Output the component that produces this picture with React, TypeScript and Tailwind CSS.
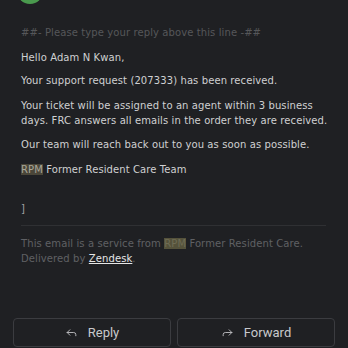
import { Reply, Forward } from "lucide-react";

export default function App() {
  return (
    <div className="relative h-[348px] w-[348px] overflow-hidden bg-[#1f2023]">
      {/* avatar peeking at the top */}
      <div className="absolute left-[17px] top-[-22px] h-[26px] w-[26px] rounded-full bg-[#4a9a4e]" />

      <div className="pl-[21px] pr-[16px] pt-[25px] text-[10px] leading-[15px] tracking-[0.1px] text-[#cfd0d2] font-['DejaVu_Sans',sans-serif]">
        <p className="text-[#56575a]">##- Please type your reply above this line -##</p>
        <p className="mt-[10px]">Hello Adam N Kwan,</p>
        <p className="mt-[8px]">Your support request (207333) has been received.</p>
        <p className="mt-[10px]">
          Your ticket will be assigned to an agent within 3 business days. FRC answers all emails in the order they are received.
        </p>
        <p className="mt-[9px]">Our team will reach back out to you as soon as possible.</p>
        <p className="mt-[10px]">
          <span className="bg-[#4a4639] text-[#a9a69a]">RPM</span> Former Resident Care Team
        </p>
        <p className="mt-[24px] text-[#a0a1a4]">]</p>
        <div className="mt-[9px] h-px w-[305px] bg-[#2f3033]" />
        <p className="mt-[10px] text-[#5f6064]">
          This email is a service from <span className="bg-[#55523b] text-[#6f6c55]">RPM</span> Former Resident Care.
          <br />
          Delivered by <span className="text-[#e6e6e6] underline">Zendesk</span>.
        </p>
      </div>

      <div className="absolute bottom-[1px] left-[13px] right-[13px] flex gap-[6px] font-['Roboto',sans-serif] text-[13px] text-[#c8c9cc]">
        <button className="flex h-[29px] flex-1 items-center justify-center gap-[10px] rounded-[4px] border border-[#3b3c40]">
          <Reply size={13} strokeWidth={1.6} />
          <span>Reply</span>
        </button>
        <button className="flex h-[29px] flex-1 items-center justify-center gap-[10px] rounded-[4px] border border-[#3b3c40]">
          <Forward size={13} strokeWidth={1.6} />
          <span>Forward</span>
        </button>
      </div>
    </div>
  );
}
